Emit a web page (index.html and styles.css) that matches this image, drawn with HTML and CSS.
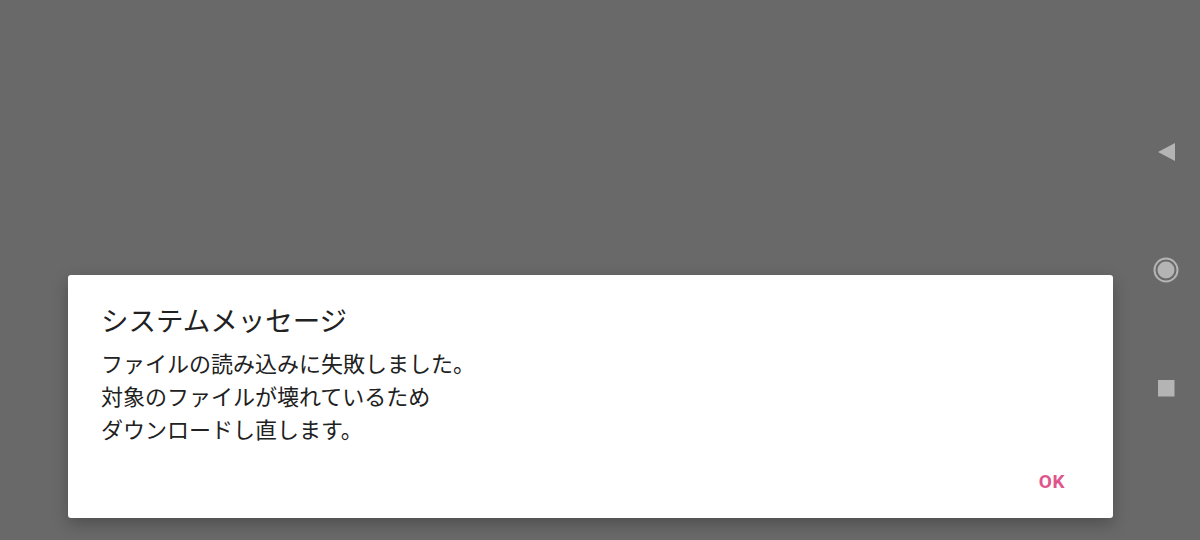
FILE: index.html
```html
<!DOCTYPE html>
<html lang="ja">
<head>
  <meta charset="UTF-8">
  <meta name="viewport" content="width=device-width, initial-scale=1.0">
  <title>システムメッセージ</title>
  <link rel="stylesheet" href="styles.css">
</head>
<body>
  <div class="screen">
    <!-- 画面の中身（ダイアログ） -->
    <main class="content">
      <div class="dialog">
        <h1 class="dialog-title">システムメッセージ</h1>
        <p class="dialog-text">ファイルの読み込みに失敗しました。<br>対象のファイルが壊れているため<br>ダウンロードし直します。</p>
        <div class="dialog-actions">
          <button class="okBtn">OK</button>
        </div>
      </div>
    </main>

    <!-- ナビゲーションバー -->
    <nav class="navbar">
      <svg class="nav-icon" width="28" height="28" viewBox="0 0 28 28">
        <path d="M23 5 L23 23 L6 14 Z" fill="#b4b4b4"/>
      </svg>
      <svg class="nav-icon" width="28" height="28" viewBox="0 0 28 28">
        <circle cx="14" cy="14" r="11.5" fill="none" stroke="#b4b4b4" stroke-width="2"/>
        <circle cx="14" cy="14" r="8.5" fill="#b4b4b4"/>
      </svg>
      <svg class="nav-icon" width="28" height="28" viewBox="0 0 28 28">
        <rect x="6" y="6" width="16.5" height="16.5" fill="#b4b4b4"/>
      </svg>
    </nav>
  </div>
</body>
</html>
```

FILE: styles.css
```css
body {
  margin: 0;
  padding: 0;
  background-color: #696969;
  font-family: "Noto Sans CJK JP", "Noto Sans", sans-serif;
  overflow: hidden;
}
.screen {
  display: flex;
  height: 540px;
}
.content {
  flex: 1;
  padding: 275px 19px 0 68px;
}
.dialog {
  background-color: #fff;
  border-radius: 3px;
  height: 243px;
  box-sizing: border-box;
  padding: 24px 48px 0 33px;
  box-shadow: 0 6px 16px rgba(0, 0, 0, 0.25);
  display: flex;
  flex-direction: column;
}
.dialog-title {
  margin: 0;
  font-size: 27.5px;
  font-weight: normal;
  line-height: 40px;
  color: #212121;
}
.dialog-text {
  margin: 7px 0 0;
  font-size: 22px;
  line-height: 33px;
  color: #212121;
}
.dialog-actions {
  display: flex;
  justify-content: flex-end;
  margin-top: 25px;
}
.okBtn {
  background: none;
  border: none;
  padding: 0;
  font-family: Roboto, "Noto Sans", sans-serif;
  font-size: 19px;
  font-weight: bold;
  color: #e0558a;
  letter-spacing: 0.5px;
  cursor: pointer;
}
.navbar {
  width: 68px;
  display: flex;
  flex-direction: column;
  align-items: center;
  padding-top: 138px;
  gap: 90px;
}
.nav-icon {
  display: block;
}
```
